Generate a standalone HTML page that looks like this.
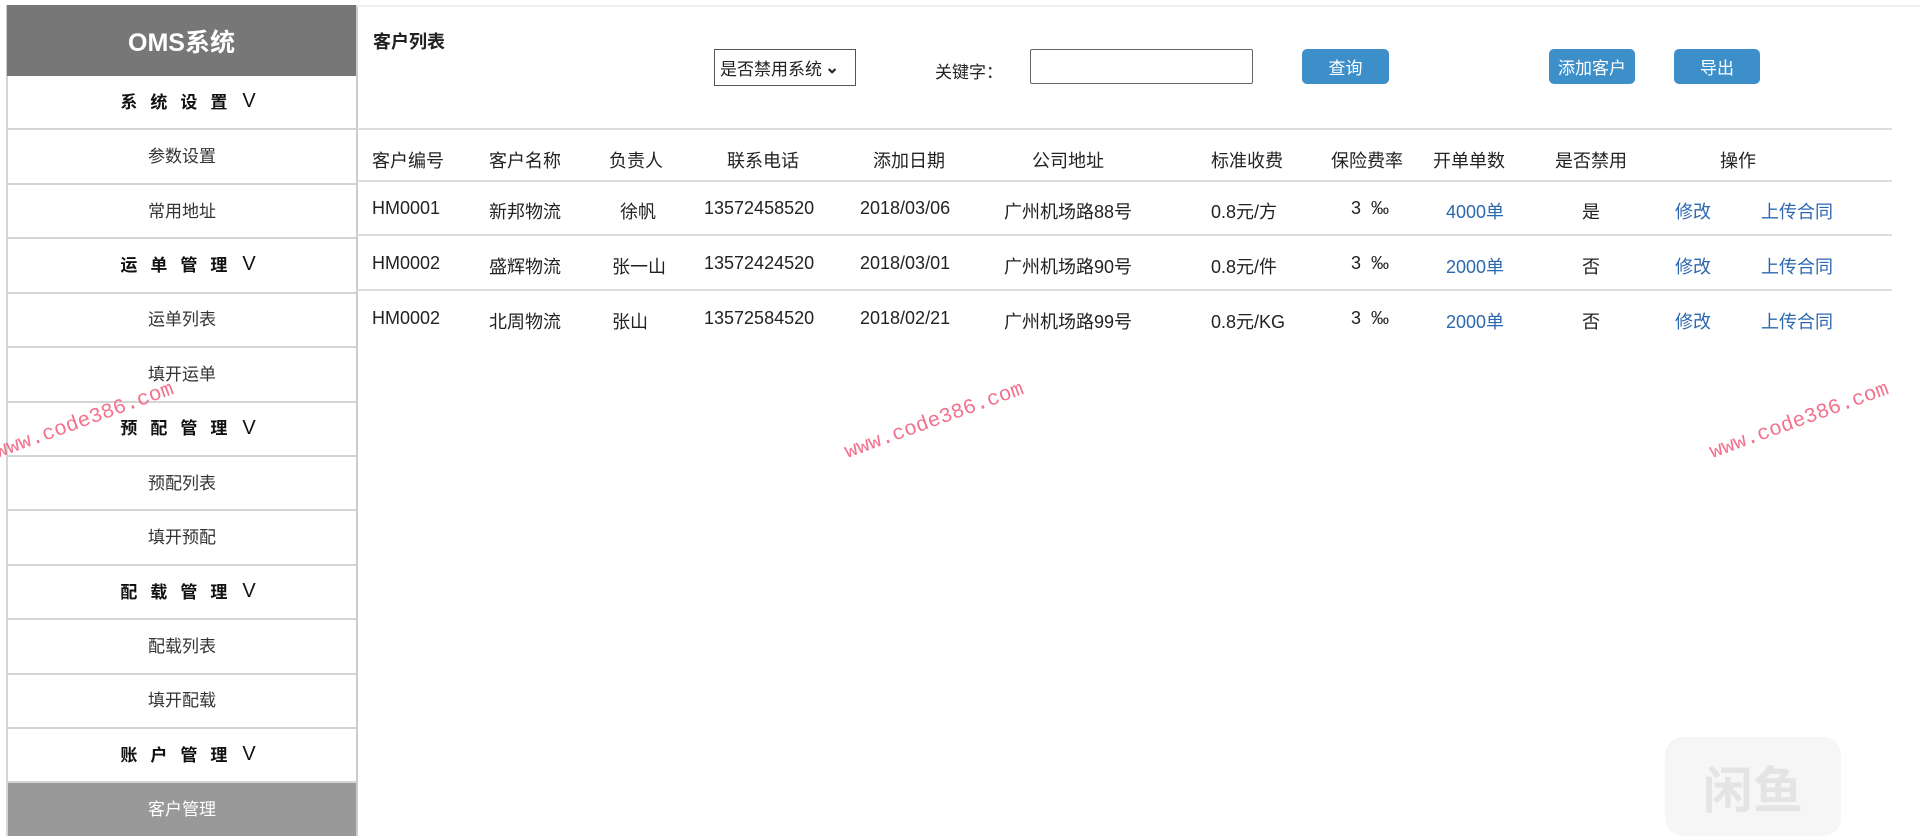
<!DOCTYPE html>
<html><head><meta charset="utf-8"><style>
*{margin:0;padding:0;box-sizing:border-box}
body{width:1920px;height:836px;background:#fff;position:relative;overflow:hidden;font-family:"Liberation Sans","Noto Sans CJK SC",sans-serif;color:#222}
.side{position:absolute;left:6px;top:5px;width:352px;height:831px;display:flex;flex-direction:column;border-right:2px solid #ccc}
.hd{height:71px;background:#777;color:#fff;font-size:25px;font-weight:bold;display:flex;align-items:center;justify-content:center;border-left:1px solid #ccc}
.it{flex:1;display:flex;align-items:center;justify-content:center;border-bottom:2px solid #d4d4d4;border-left:2px solid #d4d4d4;font-size:17px;color:#333;line-height:1}
.sec{font-weight:bold;letter-spacing:13px;color:#111;padding-left:12px}
.sec span{font-weight:normal;letter-spacing:0;margin-left:2px;font-size:20px;line-height:1;position:relative;top:-1px}
.act{background:#999;color:#fff;border-bottom:none}
.a{position:absolute;white-space:nowrap;font-size:18px;color:#222}
.l{color:#2c68b0}
.btn{position:absolute;top:49px;height:35px;background:#3d8fca;color:#fff;border-radius:5px;font-size:17px;display:flex;align-items:center;justify-content:center}
.hr{position:absolute;left:357px;width:1535px;height:2px;background:#ddd}
.wm{position:absolute;color:#f05a7a;font-family:"Liberation Mono",monospace;font-size:21px;transform:rotate(-20deg);white-space:nowrap;opacity:.85}
</style></head><body>
<div class="side">
<div class="hd">OMS系统</div>
<div class="it sec">系统设置<span>V</span></div>
<div class="it">参数设置</div>
<div class="it">常用地址</div>
<div class="it sec">运单管理<span>V</span></div>
<div class="it">运单列表</div>
<div class="it">填开运单</div>
<div class="it sec">预配管理<span>V</span></div>
<div class="it">预配列表</div>
<div class="it">填开预配</div>
<div class="it sec">配载管理<span>V</span></div>
<div class="it">配载列表</div>
<div class="it">填开配载</div>
<div class="it sec">账户管理<span>V</span></div>
<div class="it act">客户管理</div>
</div>
<div style="position:absolute;left:357px;top:5px;width:1563px;height:2px;background:#eee"></div>
<div class="a" style="left:373px;top:28px;font-size:18px;font-weight:bold">客户列表</div>
<div style="position:absolute;left:714px;top:49px;width:142px;height:37px;border:1px solid #555;font-size:17px;display:flex;align-items:center;padding-left:5px">是否禁用系统 <b style="margin-left:3px">⌄</b></div>
<div class="a" style="left:935px;top:58px;font-size:17px">关键字：</div>
<div style="position:absolute;left:1030px;top:49px;width:223px;height:35px;border:1px solid #666;border-radius:2px"></div>
<div class="btn" style="left:1302px;width:87px">查询</div>
<div class="btn" style="left:1549px;width:86px">添加客户</div>
<div class="btn" style="left:1674px;width:86px">导出</div>
<div class="hr" style="top:128px"></div>
<div class="hr" style="top:180px"></div>
<div class="hr" style="top:234px"></div>
<div class="hr" style="top:289px"></div>
<div class="a" style="top:147px;left:372px">客户编号</div><div class="a" style="top:147px;left:489px">客户名称</div><div class="a" style="top:147px;left:609px">负责人</div><div class="a" style="top:147px;left:727px">联系电话</div><div class="a" style="top:147px;left:873px">添加日期</div><div class="a" style="top:147px;left:1032px">公司地址</div><div class="a" style="top:147px;left:1211px">标准收费</div><div class="a" style="top:147px;left:1331px">保险费率</div><div class="a" style="top:147px;left:1433px">开单单数</div><div class="a" style="top:147px;left:1555px">是否禁用</div><div class="a" style="top:147px;left:1720px">操作</div>
<div class="a" style="top:198px;left:372px">HM0001</div><div class="a" style="top:198px;left:489px">新邦物流</div><div class="a" style="top:198px;left:620px">徐帆</div><div class="a" style="top:198px;left:704px">13572458520</div><div class="a" style="top:198px;left:860px">2018/03/06</div><div class="a" style="top:198px;left:1004px">广州机场路88号</div><div class="a" style="top:198px;left:1211px">0.8元/方</div><div class="a" style="top:198px;left:1351px">3&nbsp;&nbsp;‰</div><div class="a l" style="top:198px;left:1446px">4000单</div><div class="a" style="top:198px;left:1582px">是</div><div class="a l" style="top:198px;left:1675px">修改</div><div class="a l" style="top:198px;left:1761px">上传合同</div>
<div class="a" style="top:253px;left:372px">HM0002</div><div class="a" style="top:253px;left:489px">盛辉物流</div><div class="a" style="top:253px;left:612px">张一山</div><div class="a" style="top:253px;left:704px">13572424520</div><div class="a" style="top:253px;left:860px">2018/03/01</div><div class="a" style="top:253px;left:1004px">广州机场路90号</div><div class="a" style="top:253px;left:1211px">0.8元/件</div><div class="a" style="top:253px;left:1351px">3&nbsp;&nbsp;‰</div><div class="a l" style="top:253px;left:1446px">2000单</div><div class="a" style="top:253px;left:1582px">否</div><div class="a l" style="top:253px;left:1675px">修改</div><div class="a l" style="top:253px;left:1761px">上传合同</div>
<div class="a" style="top:308px;left:372px">HM0002</div><div class="a" style="top:308px;left:489px">北周物流</div><div class="a" style="top:308px;left:612px">张山</div><div class="a" style="top:308px;left:704px">13572584520</div><div class="a" style="top:308px;left:860px">2018/02/21</div><div class="a" style="top:308px;left:1004px">广州机场路99号</div><div class="a" style="top:308px;left:1211px">0.8元/KG</div><div class="a" style="top:308px;left:1351px">3&nbsp;&nbsp;‰</div><div class="a l" style="top:308px;left:1446px">2000单</div><div class="a" style="top:308px;left:1582px">否</div><div class="a l" style="top:308px;left:1675px">修改</div><div class="a l" style="top:308px;left:1761px">上传合同</div>
<div class="wm" style="left:-10px;top:410px">www.code386.com</div>
<div class="wm" style="left:840px;top:410px">www.code386.com</div>
<div class="wm" style="left:1705px;top:410px">www.code386.com</div>
<div style="position:absolute;left:1665px;top:737px;width:176px;height:99px;border-radius:18px;background:#f6f6f6;color:#e4e4e4;font-size:50px;font-weight:bold;display:flex;align-items:center;justify-content:center">闲鱼</div>
</body></html>
